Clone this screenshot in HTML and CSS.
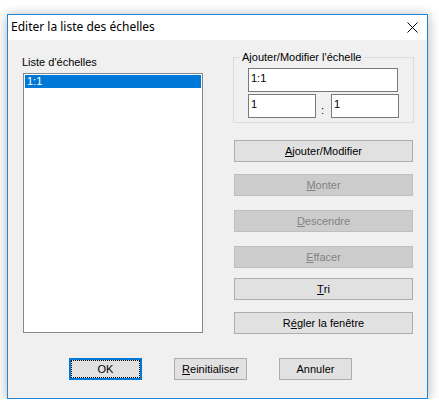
FILE: index.html
```html
<!DOCTYPE html>
<html lang="fr">
<head>
  <meta charset="UTF-8">
  <title>Editer la liste des échelles</title>
  <link rel="stylesheet" href="styles.css">
</head>
<body>
  <div class="window">
    <div class="titlebar">
      <span class="title">Editer la liste des échelles</span>
      <svg class="close" width="11" height="11" viewBox="0 0 11 11">
        <path d="M0.5 0.5 L10.5 10.5 M10.5 0.5 L0.5 10.5" stroke="#000" stroke-width="1" fill="none"/>
      </svg>
    </div>
    <div class="client">
      <div class="main">
        <div class="left">
          <div class="label">Liste d'échelles</div>
          <div class="listbox">
            <div class="item selected">1:1</div>
          </div>
        </div>
        <div class="right">
          <fieldset class="group">
            <legend>Ajouter/Modifier l'échelle</legend>
            <input class="field wide" type="text" value="1:1">
            <div class="ratio">
              <input class="field small" type="text" value="1">
              <span class="colon">:</span>
              <input class="field small" type="text" value="1">
            </div>
          </fieldset>
          <div class="btn b-add"><u>A</u>jouter/Modifier</div>
          <div class="btn b-up disabled"><u>M</u>onter</div>
          <div class="btn b-down disabled"><u>D</u>escendre</div>
          <div class="btn b-del disabled"><u>E</u>ffacer</div>
          <div class="btn b-sort"><u>T</u>ri</div>
          <div class="btn b-fit">R<u>é</u>gler la fenêtre</div>
        </div>
      </div>
      <div class="footer">
        <div class="btn small-btn default">OK</div>
        <div class="btn small-btn"><u>R</u>einitialiser</div>
        <div class="btn small-btn">Annuler</div>
      </div>
    </div>
  </div>
</body>
</html>
```

FILE: styles.css
```css
body {
  margin: 0;
  background-color: #fff;
  font-family: "Liberation Sans", Arial, sans-serif;
  font-size: 11px;
  line-height: 13px;
  color: #000;
}

.window {
  box-sizing: border-box;
  width: 421px;
  height: 385px;
  margin: 14px 0 0 7px;
  border: 1px solid #1c86d9;
  background-color: #f0f0f0;
  box-shadow: 0 0 10px rgba(0,0,0,0.18), 0 4px 14px rgba(0,0,0,0.14);
}

.titlebar {
  height: 25px;
  background-color: #fff;
  display: flex;
  align-items: center;
  justify-content: space-between;
  padding-left: 3px;
}

.title {
  font-family: "Noto Sans", "Open Sans", sans-serif;
  font-size: 12px;
  line-height: 16px;
  margin-top: -2px;
}

.close {
  margin-right: 9px;
}

.client {
  padding: 11px 0 0 15px;
}

.main {
  display: flex;
  gap: 30px;
}

.left {
  width: 180px;
}

.label {
  margin: 5px 0 0 -1px;
}

.listbox {
  box-sizing: border-box;
  height: 260px;
  margin-top: 4px;
  padding: 1px;
  border: 1px solid #828790;
  background-color: #fff;
}

.item {
  height: 13px;
  padding-left: 2px;
}

.item.selected {
  background-color: #0078d7;
  color: #fff;
}

.right {
  width: 181px;
  display: flex;
  flex-direction: column;
}

.group {
  margin: 0;
  padding: 4px 14px 4px 14px;
  border: 1px solid #dcdcdc;
}

.group legend {
  padding: 0 2px;
  margin-left: -8px;
}

.field {
  box-sizing: border-box;
  height: 24px;
  margin: 0;
  padding: 2px 2px 7px 2px;
  border: 1px solid #7a7a7a;
  font-family: inherit;
  font-size: 11px;
  line-height: 13px;
  color: #000;
  background-color: #fff;
  outline: none;
}

.field.wide {
  display: block;
  width: 150px;
}

.ratio {
  display: flex;
  margin-top: 2px;
}

.field.small {
  width: 68px;
}

.colon {
  width: 15px;
  box-sizing: border-box;
  padding-left: 5px;
  align-self: flex-end;
  margin-bottom: 1px;
}

.btn {
  box-sizing: border-box;
  height: 22px;
  display: flex;
  align-items: center;
  justify-content: center;
  border: 1px solid #adadad;
  background-color: #e1e1e1;
  color: #000;
  cursor: default;
}

.btn.disabled {
  background-color: #cccccc;
  border-color: #bfbfbf;
  color: #838383;
}

.right .btn {
  width: 179px;
  margin-left: 1px;
}

.right .b-add { margin-top: 17px; }
.right .b-up { margin-top: 12px; }
.right .b-down { margin-top: 14px; }
.right .b-del { margin-top: 14px; }
.right .b-sort { margin-top: 10px; }
.right .b-fit { margin-top: 12px; }

.footer {
  display: flex;
  gap: 32px;
  margin: 24px 0 0 46px;
}

.small-btn {
  width: 73px;
}

.btn.default {
  border: 2px solid #0078d7;
  outline: 1px dotted #000;
  outline-offset: -3px;
}
```
